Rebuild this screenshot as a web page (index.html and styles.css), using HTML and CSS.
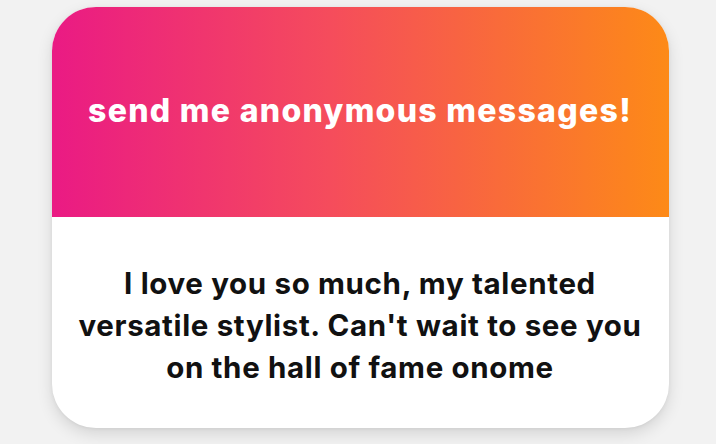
FILE: index.html
```html
<!DOCTYPE html>
<html>
<head>
<meta charset="utf-8">
<link rel="stylesheet" href="styles.css">
</head>
<body>
<div class="page">
  <div class="card">
    <div class="header">
      <h1 class="title">send me anonymous messages!</h1>
    </div>
    <div class="body">
      <p class="message">I love you so much, my talented versatile stylist. Can't wait to see you on the hall of fame onome</p>
    </div>
  </div>
</div>
</body>
</html>
```
FILE: styles.css
```css
html, body {
  margin: 0;
  padding: 0;
  width: 716px;
  height: 444px;
  overflow: hidden;
  background: #f2f2f2;
}
.page {
  display: flex;
  justify-content: center;
  padding-top: 7px;
  padding-left: 4px;
}
.card {
  width: 617px;
  height: 421px;
  border-radius: 44px;
  overflow: hidden;
  background: #fff;
  box-shadow: 0 6px 16px rgba(0,0,0,0.12), 0 1px 4px rgba(0,0,0,0.06);
  display: flex;
  flex-direction: column;
}
.header {
  height: 210px;
  background: linear-gradient(90deg, #ea1a84 0%, #f54c5c 45%, #fd8a17 100%);
  display: flex;
  align-items: center;
  justify-content: center;
}
.title {
  margin: 0;
  font-family: Inter, "Liberation Sans", sans-serif;
  font-weight: 800;
  font-size: 32px;
  letter-spacing: 1.3px;
  color: #fff;
  padding-bottom: 4px;
}
.body {
  flex: 1;
  display: flex;
  align-items: center;
  justify-content: center;
  padding: 4px 16px 0;
}
.message {
  margin: 0;
  text-align: center;
  font-family: Inter, "Liberation Sans", sans-serif;
  font-weight: 700;
  font-size: 29.5px;
  line-height: 42px;
  letter-spacing: 0.65px;
  color: #111;
}
```
